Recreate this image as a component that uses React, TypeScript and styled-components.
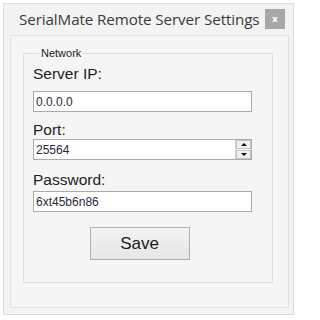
import styled, { createGlobalStyle } from "styled-components";

const Global = createGlobalStyle`
  body {
    margin: 0;
    background: #ffffff;
    font-family: "Liberation Sans", Arial, sans-serif;
  }
`;

const Window = styled.div`
  margin: 3px 0 0 3px;
  width: 291px;
  height: 312px;
  box-sizing: border-box;
  border: 1px solid #dcdcdc;
  background: #f3f3f3;
  display: flex;
  flex-direction: column;
`;

const TitleBar = styled.div`
  height: 30px;
  display: flex;
  align-items: center;
  justify-content: space-between;
  padding: 0 8px 0 15px;
`;

const Title = styled.h1`
  margin: 0;
  font-family: "Open Sans", "Noto Sans", sans-serif;
  font-weight: 400;
  font-size: 15.2px;
  color: #3a3a3a;
  letter-spacing: -0.1px;
`;

const CloseButton = styled.button`
  width: 20px;
  height: 20px;
  border: none;
  padding: 0;
  background: #a8a8a8;
  color: #ffffff;
  font-family: "DejaVu Sans", sans-serif;
  font-size: 9px;
  font-weight: 700;
  line-height: 20px;
`;

const Panel = styled.div`
  flex: 1;
  margin: 1px 4px 6px 6px;
  border: 1px solid #e2e2e2;
  background: #f5f5f5;
  padding: 11px 15px 24px 12px;
  display: flex;
`;

const GroupBox = styled.fieldset`
  flex: 1;
  margin: 0;
  border: 1px solid #dcdcdc;
  padding: 0 20px 21px 9px;
  display: flex;
  flex-direction: column;
`;

const Legend = styled.legend`
  margin-left: 6px;
  padding: 0 2px;
  font-size: 11px;
  color: #222;
  line-height: 13px;
`;

const Field = styled.div<{ $top: number }>`
  display: flex;
  flex-direction: column;
  margin-top: ${(p) => p.$top}px;
`;

const Label = styled.label<{ $gap: number }>`
  font-size: 15.5px;
  color: #222;
  line-height: 18px;
  margin-bottom: ${(p) => p.$gap}px;
`;

const InputBox = styled.div`
  height: 21px;
  box-sizing: border-box;
  border: 1px solid #ababab;
  background: #ffffff;
  display: flex;
  align-items: stretch;
`;

const Input = styled.input`
  flex: 1;
  min-width: 0;
  border: none;
  outline: none;
  padding: 0 2px;
  font-family: "Liberation Sans", Arial, sans-serif;
  font-size: 12px;
  color: #2a2a3a;
  background: transparent;
`;

const Spinner = styled.div`
  width: 15px;
  display: flex;
  flex-direction: column;
  border-left: 1px solid #d0d0d0;
`;

const SpinButton = styled.div<{ $down?: boolean }>`
  flex: 1;
  display: flex;
  align-items: center;
  justify-content: center;
  background: #f0f0f0;
  border: 1px solid #c4c4c4;
  margin: ${(p) => (p.$down ? "0" : "0 0 1px 0")};

  &::after {
    content: "";
    border-left: 3px solid transparent;
    border-right: 3px solid transparent;
    ${(p) =>
      p.$down ? "border-top: 3px solid #111;" : "border-bottom: 3px solid #111;"}
  }
`;

const SaveRow = styled.div`
  display: flex;
  justify-content: center;
  margin-top: 15px;
  padding-right: 6px;
`;

const SaveButton = styled.button`
  width: 100px;
  height: 33px;
  border: 1px solid #adadad;
  background: linear-gradient(#f2f2f2, #e6e6e6);
  font-family: "Liberation Sans", Arial, sans-serif;
  font-size: 17px;
  color: #1a1a1a;
  padding: 0;
`;

export default function App() {
  return (
    <>
      <Global />
      <Window>
        <TitleBar>
          <Title>SerialMate Remote Server Settings</Title>
          <CloseButton>x</CloseButton>
        </TitleBar>
        <Panel>
          <GroupBox>
            <Legend>Network</Legend>
            <Field $top={5}>
              <Label $gap={8}>Server IP:</Label>
              <InputBox>
                <Input defaultValue="0.0.0.0" />
              </InputBox>
            </Field>
            <Field $top={9}>
              <Label $gap={0}>Port:</Label>
              <InputBox>
                <Input defaultValue="25564" />
                <Spinner>
                  <SpinButton />
                  <SpinButton $down />
                </Spinner>
              </InputBox>
            </Field>
            <Field $top={11}>
              <Label $gap={2}>Password:</Label>
              <InputBox>
                <Input defaultValue="6xt45b6n86" />
              </InputBox>
            </Field>
            <SaveRow>
              <SaveButton>Save</SaveButton>
            </SaveRow>
          </GroupBox>
        </Panel>
      </Window>
    </>
  );
}
